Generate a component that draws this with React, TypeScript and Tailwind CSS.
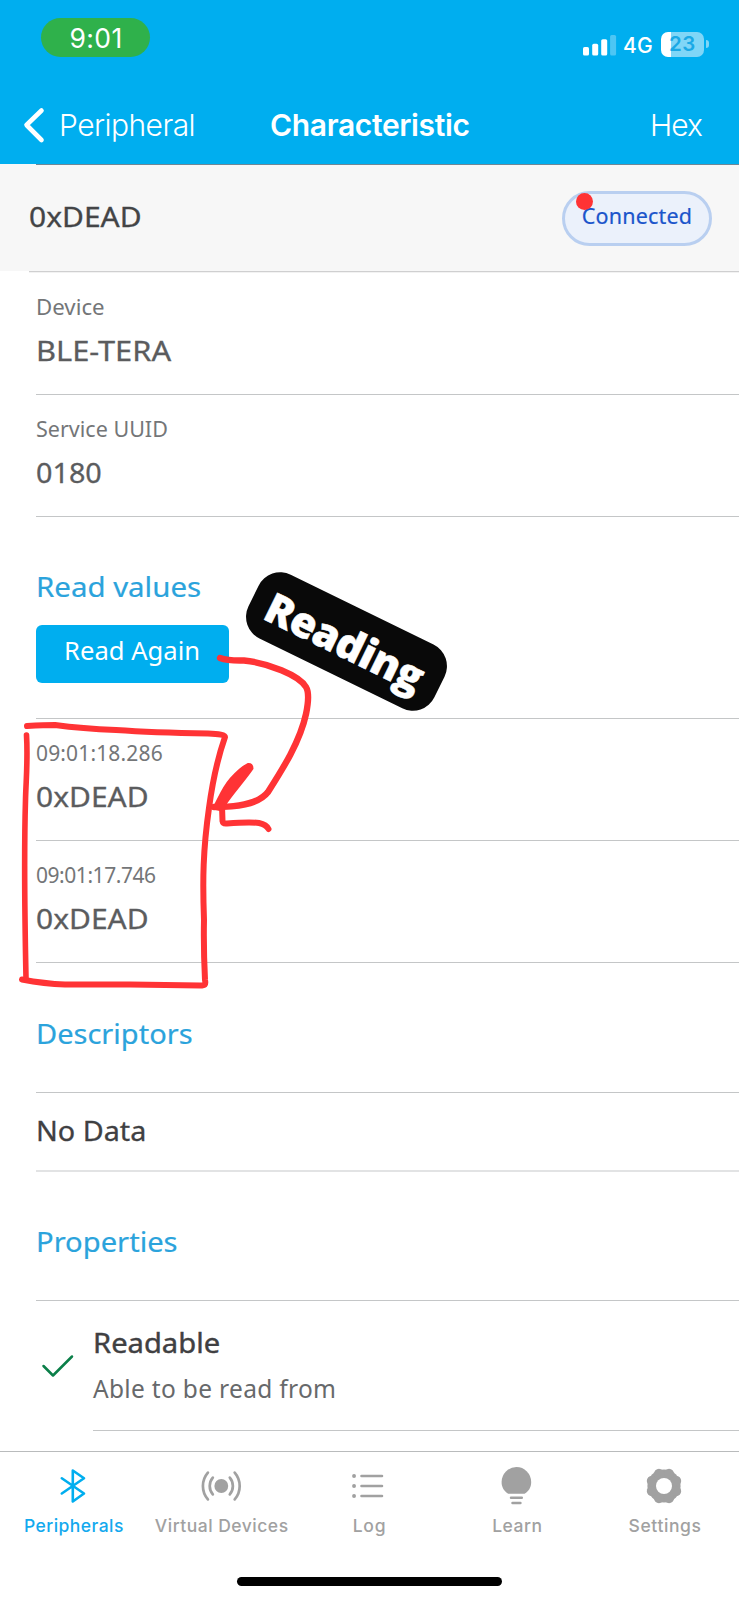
import type { ReactNode } from "react";

function StatusBar() {
  return (
    <div className="flex h-[75px] items-start justify-between pl-[41px] pr-[30px] pt-[18px]">
      <div className="flex h-[39px] w-[109px] items-center justify-center rounded-full bg-[#2fb14b] pl-px pt-[2px] font-['Inter',sans-serif] text-[26.5px] font-normal tracking-[0.4px] text-white">
        9:01
      </div>
      <div className="flex h-[24px] items-center pt-[28px]">
        <svg className="-mt-[2px]" width="34" height="22" viewBox="0 0 34 22" fill="#fff">
          <rect x="0" y="13" width="6" height="8.5" rx="1.6" />
          <rect x="9.2" y="9.8" width="6" height="11.7" rx="1.6" />
          <rect x="18.2" y="5.2" width="6" height="16.3" rx="1.6" />
          <rect x="27.1" y="1" width="6" height="20.5" rx="1.6" opacity="0.3" />
        </svg>
        <span className="-mt-px ml-[6px] w-[32px] font-['Inter',sans-serif] text-[21px] font-medium leading-6 tracking-[0.1px] text-white">
          4G
        </span>
        <div className="ml-[6px] -mt-[4px] flex h-[25px] w-[43px] items-center justify-center overflow-hidden rounded-[7px] bg-[linear-gradient(90deg,#fff_10px,#80d6f7_10px)] font-['Inter',sans-serif] text-[20.5px] font-semibold leading-6 tracking-[0.6px] text-[#1aa9e6]">
          23
        </div>
        <div className="-mt-[4px] ml-[2px] h-[8px] w-[3px] rounded-r-full bg-[#80d6f7]" />
      </div>
    </div>
  );
}

function NavBar() {
  return (
    <div className="flex h-[89px] items-start pt-[30px] font-['Inter',sans-serif] text-[30px] leading-10 text-white">
      <div className="flex w-[270px] items-center pl-[22px]">
        <svg width="24" height="40" viewBox="0 0 24 40" fill="none" stroke="#fff" strokeWidth="4.6" strokeLinecap="round" strokeLinejoin="round">
          <path d="M19.5 5.5 4.5 20l15 15" />
        </svg>
        <span className="ml-[13px] font-[350] tracking-[-0.55px]">Peripheral</span>
      </div>
      <h1 className="flex-1 font-semibold tracking-[-0.35px]">Characteristic</h1>
      <span className="w-[89px] font-[350] tracking-[-1px]">Hex</span>
    </div>
  );
}

function Row({ label, value, labelClass, valueClass }: { label: string; value: string; labelClass: string; valueClass: string }) {
  return (
    <div className="ml-9 flex h-[122px] flex-col border-b border-[#c4c6c7] pt-[19px]">
      <span className={"w-fit origin-left text-[21px] leading-[30px] text-[#747678] " + labelClass}>{label}</span>
      <span className={"mt-[8px] w-fit origin-left text-[27.5px] leading-[41px] text-[#5b5c5e] [-webkit-text-stroke:0.3px] " + valueClass}>{value}</span>
    </div>
  );
}

function Heading({ children, className }: { children: ReactNode; className: string }) {
  return <h2 className={"w-fit origin-left text-[27.5px] leading-10 text-[#2ba3dc] [-webkit-text-stroke:0.2px] " + className}>{children}</h2>;
}

function Tab({ icon, label, className }: { icon: ReactNode; label: string; className: string }) {
  return (
    <div className="flex w-1/5 flex-col items-center">
      <svg width="44" height="44" viewBox="0 0 44 44">{icon}</svg>
      <span className={"mt-[6px] whitespace-nowrap pl-[2px] font-['Inter',sans-serif] text-[17.5px] leading-6 " + className}>{label}</span>
    </div>
  );
}

const gray = "#a1a1a1";
const lobes = [22.5, 67.5, 112.5, 157.5, 202.5, 247.5, 292.5, 337.5];

function TabBar() {
  return (
    <nav className="flex h-[149px] flex-col items-center border-t border-[#b9bbbc] bg-white">
      <div className="-ml-[2px] flex h-[125px] w-[739px] pt-[12px]">
        <Tab
          label="Peripherals"
          className="font-medium tracking-[0.45px] text-[#13a9ee]"
          icon={<path d="M10.8 14.3 33 29.5 21.8 37.5V6.5l11.2 7.8-22.2 15.2" fill="none" stroke="#00aeef" strokeWidth="2.6" strokeLinecap="round" strokeLinejoin="round" />}
        />
        <Tab
          label="Virtual Devices"
          className="font-[450] tracking-[0.5px] text-[#a1a1a1]"
          icon={
            <g fill="none" stroke={gray} strokeWidth="2.7" strokeLinecap="round">
              <circle cx="22.3" cy="22" r="6.9" fill={gray} stroke="none" />
              <path d="M13.8 13.6a13 13 0 0 0 0 16.8M30.8 13.6a13 13 0 0 1 0 16.8M8.9 8.6a20.5 20.5 0 0 0 0 26.8M35.7 8.6a20.5 20.5 0 0 1 0 26.8" />
            </g>
          }
        />
        <Tab
          label="Log"
          className="font-[450] tracking-[0.8px] text-[#a1a1a1]"
          icon={
            <g stroke={gray} strokeWidth="2.6" strokeLinecap="round">
              <path d="M15.5 12h20.5M15.5 22h20.5M15.5 32h20.5" />
              <path d="M8 12h.1M8 22h.1M8 32h.1" strokeWidth="3.8" />
            </g>
          }
        />
        <Tab
          label="Learn"
          className="font-[450] tracking-[0.5px] text-[#a1a1a1]"
          icon={
            <g fill={gray}>
              <path d="M14.2 29.8C10 27.4 7.6 23.300 7.6 18.1a14.8 15 0 0 1 29.6 0c0 5.2-2.4 9.3-6.6 11.7Z" />
              <path d="M17 33.7h10.8M18.5 39h7.9" stroke={gray} strokeWidth="2.5" strokeLinecap="round" />
            </g>
          }
        />
        <Tab
          label="Settings"
          className="font-[450] tracking-[0.6px] text-[#a1a1a1]"
          icon={
            <g>
              <g fill={gray}>
                <circle cx="22" cy="22" r="16.6" />
                {lobes.map((a) => (
                  <circle key={a} cx="22" cy="8.8" r="5" transform={`rotate(${a} 22 22)`} />
                ))}
              </g>
              <circle cx="22" cy="22" r="8" fill="#fff" />
            </g>
          }
        />
      </div>
      <div className="h-[9px] w-[265px] rounded-full bg-black" />
    </nav>
  );
}

function Annotations() {
  return (
    <>
      <svg className="pointer-events-none absolute left-0 top-0" width="739" height="1600" viewBox="0 0 739 1600" fill="none" stroke="#ff3335" strokeWidth="6" strokeLinecap="round" strokeLinejoin="round">
        <path d="M27 726C36 725.5 48 725 55 725C70 727 92 729 116 730C145 732 180 733 208 733.5Q225 734 225 737C217 760 213 778 209 808C203 850 202.5 880 204 920C203.5 945 204 960 205 980C206 985 205 985.5 200 985.5L130 984.5L65 984.5C50 984 35 982 22 979.5" />
        <path d="M26.5 735C28 760 26 780 25.5 800C24 850 25 930 26 978" strokeWidth="5.6" />
        <path d="M220 658C228 661 236 660.5 244 660.5C268 663 299 675 306 687C309 692 308.5 702 306 714C300 742 282 770 268 792C258 805 235 807 214 807" strokeWidth="6.4" />
        <path d="M248 764.5Q252 764 252 768.5C245 779 233 792 225 804L222 810L214 808C219 799 223 788 231 779C238 771 243 767 248 764.5Z" strokeWidth="3" fill="#ff3335" />
        <path d="M216 807L222 806L222.5 821Q223 824 227 823.5C240 822.5 252 822 259 823C264 824 267 826 268.5 829" />
        <circle cx="584.5" cy="201.5" r="8.5" fill="#ff3335" stroke="none" />
      </svg>
      <div className="absolute left-[243px] top-[606px] flex h-[71px] w-[207px] rotate-[26.1deg] items-center justify-center rounded-[24px] bg-[#090909] pr-[3px] font-['Open_Sans',sans-serif] text-[42px] font-extrabold leading-none tracking-[-0.6px] text-white [-webkit-text-stroke:0.5px]">
        Reading
      </div>
    </>
  );
}

export default function App() {
  return (
    <div className="relative flex h-[1600px] w-[739px] flex-col overflow-hidden bg-white font-['Noto_Sans',sans-serif]">
      <header className="h-[164px] shrink-0 bg-[#00aeef]">
        <StatusBar />
        <NavBar />
      </header>
      <div className="h-px shrink-0 bg-[#f7f7f7] pl-9">
        <div className="h-px bg-[#6f8796]" />
      </div>
      <div className="flex h-[106px] shrink-0 items-start justify-between bg-[#f7f7f7] pl-[29px] pr-[27px]">
        <span className="mt-[32px] origin-left scale-x-[1.09] text-[27.5px] leading-10 text-[#434446] [-webkit-text-stroke:0.3px]">0xDEAD</span>
        <div className="mt-[26px] flex h-[55px] w-[150px] justify-center rounded-full border-[3.5px] border-[#b9cff0] bg-[#ebf1fb] pt-[7px] text-[21.5px] leading-[30px] tracking-[0.2px] text-[#1b55cb] [-webkit-text-stroke:0.2px]">
          Connected
        </div>
      </div>
      <main className="flex flex-1 flex-col">
        <div className="ml-[29px] h-[2px] border-b border-t border-b-[#f2f2f2] border-t-[#cfcfd0]" />
        <Row label="Device" value="BLE-TERA" labelClass="scale-x-[1.06]" valueClass="scale-x-[1.12]" />
        <Row label="Service UUID" value="0180" labelClass="scale-x-[1.025]" valueClass="scale-x-[1.045]" />
        <section className="ml-9 h-[202px] border-b border-[#c4c6c7] pt-[50px]">
          <Heading className="scale-x-[1.07]">Read values</Heading>
          <button className="mt-[18px] flex h-[58px] w-[193px] justify-center rounded-[6px] bg-[#00aeef] text-[24.5px] leading-[52px] text-white">
            <span className="scale-x-[1.045]">Read Again</span>
          </button>
        </section>
        <Row label="09:01:18.286" value="0xDEAD" labelClass="tracking-[0.15px]" valueClass="scale-x-[1.09]" />
        <Row label="09:01:17.746" value="0xDEAD" labelClass="tracking-[-0.45px]" valueClass="scale-x-[1.09]" />
        <section className="ml-9 h-[130px] border-b border-[#c4c6c7] pt-[51px]">
          <Heading className="scale-x-[1.055]">Descriptors</Heading>
        </section>
        <div className="ml-9 h-[79px] border-b-2 border-[#e2e3e4] pt-[18px]">
          <p className="w-fit origin-left scale-x-[1.045] text-[27.5px] leading-10 text-[#3f4042] [-webkit-text-stroke:0.3px]">No Data</p>
        </div>
        <section className="ml-9 h-[129px] border-b border-[#c4c6c7] pt-[50px]">
          <Heading className="scale-x-[1.06]">Properties</Heading>
        </section>
        <div className="ml-9 flex h-[130px]">
          <svg className="mt-[50px]" width="57" height="32" viewBox="0 0 57 32" fill="none" stroke="#0b7f49" strokeWidth="2.5" strokeLinecap="round" strokeLinejoin="round">
            <path d="M7.5 15 17 24.5 36 5.5" />
          </svg>
          <div className="flex flex-1 flex-col border-b border-[#c4c6c7] pt-[22px]">
            <span className="w-fit origin-left scale-x-[1.06] text-[27.5px] leading-10 text-[#3f4042] [-webkit-text-stroke:0.4px]">Readable</span>
            <span className="mt-[6px] text-[24.5px] leading-10 tracking-[0.32px] text-[#67696b]">Able to be read from</span>
          </div>
        </div>
      </main>
      <TabBar />
      <Annotations />
    </div>
  );
}
